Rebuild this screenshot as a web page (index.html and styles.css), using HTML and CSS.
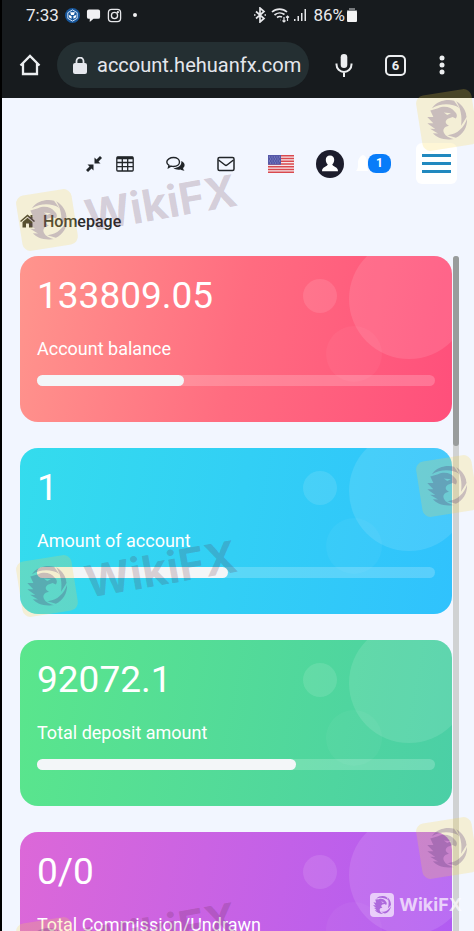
FILE: index.html
```html
<!DOCTYPE html>
<html lang="en">
<head>
  <meta charset="UTF-8">
  <meta name="viewport" content="width=device-width, initial-scale=1.0">
  <title>Homepage</title>
  <link rel="stylesheet" href="styles.css">
</head>
<body>

<!-- shared eagle mark -->
<svg class="defs" width="0" height="0" aria-hidden="true">
  <symbol id="eagle" viewBox="0 0 40 40">
    <path d="M7 6 C13 -1 24 -1 30 2 L34 10 C28 4 16 2 7 6Z"/>
    <path d="M32 3 C38 8 40 14 40 20 L33 28 C36 18 35 10 32 3Z"/>
    <path d="M40 22 C39 31 33 37 26 39 L18 35 C28 36 36 30 40 22Z"/>
    <path fill-rule="evenodd" d="M5 8 L13 7 C20 5 26 8 29 13 C31 15 31 18 29 20 L26 18 L21 19 C17 21 18 24 21 26 C16 26 14 29 15 32 C16 36 20 38 24 40 C14 40 7 36 4 31 L9 32 L2 26 L7 27 L0 20 L6 21 L1 14 L7 15Z M18 12 L21 15 L25 14Z"/>
  </symbol>
</svg>

<header class="phone">
  <div class="status">
    <span class="time">7:33</span>
    <svg class="st-icon" viewBox="0 0 16 16"><circle cx="8" cy="8" r="8" fill="#17579c"/><path d="M8 2 L13 5 V11 L8 14 L3 11 V5Z" fill="none" stroke="#dce9fa" stroke-width="1"/><path d="M5.500 4.500h5l-1 3h-3ZM4 7.500l3 1v3L4.500 10ZM12 7.500L9 8.500v3l2.500-1.500Z" fill="#fff"/></svg>
    <svg class="st-icon" viewBox="0 0 16 16"><path d="M3 1.500h10a2 2 0 0 1 2 2v6a2 2 0 0 1-2 2H8L4 15v-3.500H3a2 2 0 0 1-2-2v-6a2 2 0 0 1 2-2Z" fill="#f1f1f3"/></svg>
    <svg class="st-icon" viewBox="0 0 16 16" fill="none" stroke="#e6e7ea" stroke-width="1.400"><rect x="1.500" y="1.500" width="13" height="13" rx="3.500"/><circle cx="8" cy="8" r="3.300"/><circle cx="11.600" cy="4.400" r=".5"/></svg>
    <i class="dot"></i>
    <div class="status-right">
      <svg width="14" height="16" viewBox="0 0 14 16" fill="none" stroke="#e6e7ea" stroke-width="1.700"><path d="M3 4.500l8 7L7 15V1l4 3.500-8 7"/><path d="M1 8h1.500M11.500 8H13"/></svg>
      <svg width="19" height="16" viewBox="0 0 19 16" fill="none" stroke="#e6e7ea" stroke-width="1.700"><path d="M1 5a11 11 0 0 1 15 0M3.500 8a8 8 0 0 1 10-.5M6 10.500a5 5 0 0 1 5-.5"/><path d="M9 13h.5M13 10v5M11.500 13.500L13 15l1.500-1.500M16.500 14V9M15 10.500L16.500 9l1.500 1.500" stroke-width="1.200"/></svg>
      <svg width="13" height="14" viewBox="0 0 13 14" fill="#e6e7ea"><path d="M0 11h1.500v2H0ZM3.500 8H5v5H3.500ZM7 5h1.500v8H7ZM10.500 1H12v12h-1.500Z"/></svg>
      <span class="percent">86%</span>
      <svg width="10" height="14" viewBox="0 0 10 14"><path d="M2 0h6v2h2v2H0V2h2Z" fill="#777a7d"/><rect y="3" width="10" height="11" rx="1" fill="#f4f4f5"/></svg>
    </div>
  </div>

  <div class="browser">
    <button class="bar-btn home" aria-label="Home">
      <svg width="22" height="22" viewBox="0 0 22 22" fill="none" stroke="#eceef0" stroke-width="2.300"><path d="M1.500 11.500L11 2l9.500 9.500M4 9.500V20h14V9.500"/></svg>
    </button>
    <label class="address">
      <svg width="14" height="17" viewBox="0 0 14 17"><rect y="6" width="14" height="11" rx="2" fill="#e5e7ed"/><path d="M3.500 7V4a3.500 3.500 0 0 1 7 0v3" fill="none" stroke="#e5e7ed" stroke-width="1.800"/></svg>
      <input class="url" type="text" value="account.hehuanfx.com" aria-label="Address">
    </label>
    <button class="bar-btn mic" aria-label="Voice search">
      <svg width="18" height="24" viewBox="0 0 18 24"><rect x="5.700" y="1" width="6.600" height="14" rx="3.300" fill="#eceef0"/><path d="M1.500 10.500v1a7.500 7.500 0 0 0 15 0v-1M9 19v5" fill="none" stroke="#eceef0" stroke-width="2"/></svg>
    </button>
    <button class="bar-btn tabs" aria-label="Tabs">6</button>
    <button class="bar-btn more" aria-label="More">
      <svg width="6" height="20" viewBox="0 0 6 20" fill="#eceef0"><circle cx="3" cy="3" r="2.500"/><circle cx="3" cy="10" r="2.500"/><circle cx="3" cy="17" r="2.500"/></svg>
    </button>
  </div>
</header>

<main class="page">
  <nav class="toolbar">
    <a href="#" class="tool" aria-label="Exit full screen"><svg width="16" height="16" viewBox="0 0 16 16" fill="#212529"><path d="M8.500 7.500V1.500l2 2L14 0l2 2-3.500 3.500 2 2ZM7.500 8.500v6l-2-2L2 16l-2-2 3.500-3.500-2-2Z"/></svg></a>
    <a href="#" class="tool table-tool" aria-label="Table"><svg width="18" height="16" viewBox="0 0 18 16" fill="none" stroke="#212529" stroke-width="1.300"><rect x=".8" y="1" width="16.400" height="14" rx="1"/><path d="M1 2h16" stroke-width="2.500"/><path d="M1 6.500h16M1 10.700h16M6.300 2v13M11.700 2v13"/></svg></a>
    <a href="#" class="tool chat-tool" aria-label="Chat"><svg width="19" height="16" viewBox="0 0 19 16"><path d="M7.500 1.500C11 1.500 13.500 3.500 13.500 6S11 10.500 7.500 10.500c-1 0-1.800-.2-2.500-.4L2.500 11.500 3 9.300C1.500 8.500.8 7.300.8 6 .8 3.500 4 1.500 7.500 1.500Z" fill="none" stroke="#212529" stroke-width="1.400"/><path d="M15.300 5C18 6 19 8 18.500 10c-.3 1-.8 1.600-1.500 2.100.2 1.100.7 1.900 1.500 2.600-1.800 0-3-.5-4-1.200-2.700.5-5.400 0-7-1.500 4.500 0 8.500-2.500 7.800-7Z" fill="#212529"/></svg></a>
    <a href="#" class="tool mail-tool" aria-label="Mail"><svg width="18" height="16" viewBox="0 0 18 16" fill="none" stroke="#212529" stroke-width="1.500"><rect x="1" y="1.500" width="16" height="13" rx="1.500"/><path d="M1.500 4L8 9q1 .8 2 0l6.500-5"/></svg></a>
    <a href="#" class="tool flag-tool" aria-label="English"><svg width="26" height="18" viewBox="0 0 26 18"><path fill="#f5e8ec" d="M0 0h26v18H0Z"/><path stroke="#d9494e" stroke-width="1.400" d="M0 .7h26M0 3.500h26M0 6.200h26M0 9h26M0 11.800h26M0 14.500h26M0 17.300h26"/><path fill="#5558a8" d="M0 0h13v9.700H0Z"/><path stroke="#8d8fc8" stroke-dasharray="1 1.500" d="M1 2h11M2 4h10M1 6h11M2 8h10"/></svg></a>
    <a href="#" class="tool user-tool" aria-label="Profile"><svg width="28" height="28" viewBox="0 0 28 28"><circle cx="14" cy="14" r="14" fill="#1d1d2c"/><path d="M14 5.500c2.700 0 4.200 1.800 4.200 4.300 0 1.900-.6 3.500-1.900 4.500 0 2.700 5.700 2 5.700 7H6c0-5 5.700-4.300 5.700-7-1.300-1-1.900-2.600-1.900-4.500 0-2.500 1.500-4.300 4.200-4.300Z" fill="#fff"/></svg></a>
    <a href="#" class="tool bell-tool" aria-label="Notifications"><svg width="12" height="18" viewBox="0 0 12 18"><path d="M7 0c3 1 4 4 4 8v4l1 4H0c2-2 2-4 2-8s2-7 5-8Z" fill="#fff"/></svg><span class="badge">1</span></a>
    <button class="menu" aria-label="Menu"><i></i><i></i><i></i></button>
  </nav>

  <a href="#" class="crumb">
    <svg width="15" height="14" viewBox="0 0 15 14" fill="#2b2b2b"><path d="M0 7L7.500.5 10.500 3V1h2v3.800L15 7l-1 1-6.500-5.500L1 8Z"/><path d="M2.500 8L7.500 3.800 12.500 8v5.500H9v-4H6v4H2.500Z"/></svg>
    Homepage
  </a>

  <div class="scroller">
    <div class="cards">
      <section class="card red">
        <p class="value">133809.05</p>
        <p class="label">Account balance</p>
        <div class="bar"><div class="fill" style="width: 37%"></div></div>
        <i class="bubble small"></i><i class="bubble big"></i><i class="bubble mid"></i>
      </section>
      <section class="card blue">
        <p class="value">1</p>
        <p class="label">Amount of account</p>
        <div class="bar"><div class="fill" style="width: 48%"></div></div>
        <i class="bubble small"></i><i class="bubble big"></i><i class="bubble mid"></i>
      </section>
      <section class="card green">
        <p class="value">92072.1</p>
        <p class="label">Total deposit amount</p>
        <div class="bar"><div class="fill" style="width: 65%"></div></div>
        <i class="bubble small"></i><i class="bubble big"></i><i class="bubble mid"></i>
      </section>
      <section class="card purple">
        <p class="value">0/0</p>
        <p class="label">Total Commission/Undrawn</p>
        <div class="bar"><div class="fill" style="width: 50%"></div></div>
        <i class="bubble small"></i><i class="bubble big"></i><i class="bubble mid"></i>
      </section>
    </div>
    <div class="track"><div class="thumb"></div></div>
  </div>
</main>

<div class="marks">
  <div class="mark right row-1"><svg class="mark-logo"><use href="#eagle"/></svg></div>
  <div class="mark left row-2"><svg class="mark-logo"><use href="#eagle"/></svg></div>
  <span class="mark-text row-2">WikiFX</span>
  <div class="mark right row-3"><svg class="mark-logo"><use href="#eagle"/></svg></div>
  <div class="mark left row-4"><svg class="mark-logo"><use href="#eagle"/></svg></div>
  <span class="mark-text row-4">WikiFX</span>
  <div class="mark right row-5"><svg class="mark-logo"><use href="#eagle"/></svg></div>
  <div class="mark left row-6"><svg class="mark-logo"><use href="#eagle"/></svg></div>
  <span class="mark-text row-6">WikiFX</span>
  <div class="brand">
    <span class="brand-box"><svg width="18" height="18"><use href="#eagle"/></svg></span>
    <span>WikiFX</span>
  </div>
</div>

</body>
</html>
```
FILE: styles.css
```css
* {
  margin: 0;
  padding: 0;
  box-sizing: border-box;
}

body {
  font-family: Roboto, 'Liberation Sans', sans-serif;
  background-color: #f2f6ff;
  height: 100vh;
  display: flex;
  flex-direction: column;
  border-left: 2px solid #000;
  position: relative;
  overflow: hidden;
}

svg {
  display: block;
  flex: none;
}

button {
  border: none;
  background: none;
  cursor: pointer;
}

.defs {
  position: absolute;
}

/* Phone and browser bars */
.phone {
  background-color: #171b1e;
  color: #e9eaed;
  height: 98px;
  flex: none;
}

.status {
  height: 30px;
  padding: 0 117px 0 24px;
  display: flex;
  align-items: center;
  font-size: 17px;
}

.time {
  margin-right: 6px;
}

.st-icon {
  width: 15px;
  height: 15px;
  margin-right: 6px;
}

.dot {
  width: 4px;
  height: 4px;
  margin-left: 5px;
  border-radius: 50%;
  background-color: #f1f1f3;
}

.status-right {
  margin-left: auto;
  display: flex;
  align-items: center;
  gap: 4px;
}

.percent {
  margin: 0 -2px 0 2px;
}

.browser {
  display: flex;
  align-items: center;
  height: 70px;
  padding: 0 29px 0 17px;
}

.bar-btn {
  flex: none;
  color: #eceef0;
}

.address {
  flex: 1;
  min-width: 0;
  height: 46px;
  margin: 0 26px 0 16px;
  padding: 0 6px 0 16px;
  border-radius: 23px;
  background-color: #242f32;
  display: flex;
  align-items: center;
  gap: 10px;
}

.url {
  flex: 1;
  width: 100%;
  min-width: 0;
  border: none;
  outline: none;
  background: none;
  color: #e5e7ed;
  font-family: inherit;
  font-size: 20px;
}

.tabs {
  width: 21px;
  height: 21px;
  margin: 0 33px 0 32px;
  border: 2px solid #eceef0;
  border-radius: 5px;
  font-family: inherit;
  font-size: 13px;
  font-weight: bold;
  line-height: 17px;
}

/* Page */
.page {
  flex: 1;
  min-height: 0;
  display: flex;
  flex-direction: column;
  padding: 45px 15px 0 18px;
}

.toolbar {
  display: flex;
  align-items: center;
  justify-content: flex-end;
  height: 41px;
  padding-right: 2px;
}

.table-tool {
  margin-left: 14px;
}

.chat-tool,
.mail-tool {
  margin-left: 32px;
}

.flag-tool {
  margin-left: 33px;
}

.user-tool {
  margin-left: 22px;
}

.bell-tool {
  display: flex;
  align-items: center;
  margin-left: 12px;
  text-decoration: none;
}

.badge {
  width: 23px;
  height: 19px;
  border-radius: 8px;
  background-color: #087cf9;
  color: #fff;
  font-size: 12px;
  font-weight: bold;
  line-height: 19px;
  text-align: center;
}

.menu {
  width: 41px;
  height: 41px;
  margin-left: 25px;
  padding: 0 6px;
  border-radius: 6px;
  background-color: #fff;
  display: flex;
  flex-direction: column;
  justify-content: center;
  gap: 5px;
}

.menu i {
  height: 3px;
  background-color: #2189bf;
}

.crumb {
  display: flex;
  align-items: center;
  gap: 8px;
  height: 24px;
  margin: 25px 0 23px;
  color: #2b2b2b;
  font-size: 16px;
  font-weight: 500;
  text-decoration: none;
}

.scroller {
  flex: 1;
  min-height: 0;
  display: flex;
  gap: 1px;
}

.cards {
  flex: 1;
  overflow: hidden;
}

.card {
  position: relative;
  height: 166px;
  margin-bottom: 26px;
  padding: 18px 17px 0;
  border-radius: 18px;
  color: #fff;
  overflow: hidden;
}

.red {
  background: linear-gradient(100deg, #ff958d, #ff6c80 50%, #ff4f7b);
}

.blue {
  background: linear-gradient(100deg, #34dced, #30c2fd);
}

.green {
  background: linear-gradient(100deg, #5ae68c, #4bcfa6);
}

.purple {
  background: linear-gradient(100deg, #dc68d8, #b05cf3);
}

.value {
  font-size: 37px;
  line-height: 44px;
}

.label {
  margin-top: 19px;
  font-size: 18px;
  line-height: 24px;
}

.bar {
  height: 11px;
  margin-top: 14px;
  border-radius: 6px;
  background-color: rgba(255, 255, 255, 0.2);
}

.fill {
  height: 100%;
  border-radius: 6px;
  background-color: #f3f6f8;
}

.bubble {
  position: absolute;
  border-radius: 50%;
  background-color: rgba(255, 255, 255, 0.11);
}

.small {
  width: 34px;
  height: 34px;
  top: 23px;
  right: 115px;
}

.big {
  width: 120px;
  height: 120px;
  top: -17px;
  right: -17px;
}

.mid {
  width: 56px;
  height: 56px;
  top: 70px;
  right: 70px;
  background-color: rgba(255, 255, 255, 0.04);
}

.track {
  width: 6px;
  background-color: #d0d2d3;
  border-radius: 3px 3px 0 0;
}

.thumb {
  height: 190px;
  border-radius: 3px;
  background-color: #999c9c;
}

/* Watermarks over the page */
.marks {
  position: absolute;
  inset: 0;
  overflow: hidden;
  pointer-events: none;
}

.mark {
  position: absolute;
  width: 56px;
  height: 56px;
  padding: 8px;
  border-radius: 8px;
  background-color: rgba(250, 215, 70, 0.22);
  transform: rotate(-9deg);
}

.mark-logo {
  width: 40px;
  height: 40px;
  fill: rgba(70, 40, 110, 0.25);
}

.left {
  left: 17px;
}

.right {
  right: -1px;
}

.mark-text {
  position: absolute;
  left: 82px;
  margin-top: -17px;
  color: rgba(90, 40, 60, 0.2);
  font-family: Inter, sans-serif;
  font-size: 44px;
  font-weight: bold;
  line-height: 56px;
  transform: rotate(-10deg);
}

.row-1 {
  top: 92px;
}

.row-2 {
  top: 192px;
}

.row-3 {
  top: 458px;
}

.row-4 {
  top: 558px;
}

.row-5 {
  top: 820px;
}

.row-6 {
  top: 920px;
}

.brand {
  position: absolute;
  right: 12px;
  bottom: 14px;
  display: flex;
  align-items: center;
  gap: 5px;
  color: rgba(255, 255, 255, 0.7);
  font-family: Inter, sans-serif;
  font-size: 18px;
  font-weight: bold;
  line-height: 24px;
}

.brand-box {
  width: 24px;
  height: 24px;
  padding: 3px;
  border-radius: 4px;
  background-color: rgba(255, 255, 255, 0.65);
  fill: #ad69dc;
}
```
